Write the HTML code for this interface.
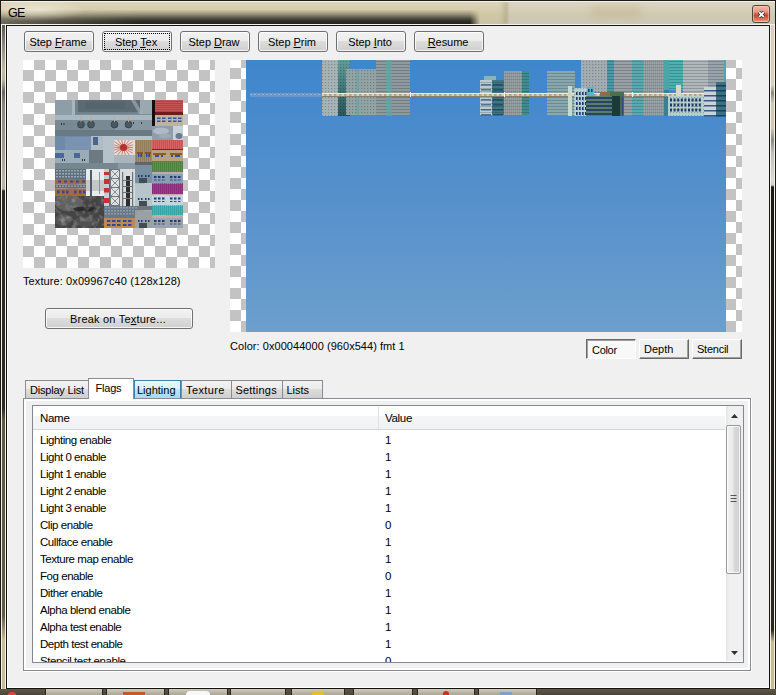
<!DOCTYPE html>
<html><head><meta charset="utf-8">
<style>
*{box-sizing:border-box;margin:0;padding:0}
html,body{width:776px;height:695px;overflow:hidden;background:#c9c1a4}
body{position:relative;font-family:"Liberation Sans",sans-serif;font-size:11px;color:#000}
.a{position:absolute}
.t{position:absolute;white-space:nowrap;line-height:13px}
/* title bar */
#frame{left:0;top:0;width:776px;height:689px;background:linear-gradient(180deg,#cdc3a2,#c2b897 50%,#bdb494);border:1px solid #1a1a16;border-bottom:none}
#title{left:1px;top:1px;width:774px;height:24px;
 background:linear-gradient(180deg,#f4efe2 0,#dcd4b8 1px,#d8cfb0 8px,#cfc6a4 12px,#bdb598 15px,#8f8a76 19px,#5f5c50 23px,#4a4840 24px)}
#band{left:140px;top:11px;width:340px;height:15px;background:#1e1e1a;filter:blur(3px);opacity:.9}
#band2{left:-10px;top:16px;width:160px;height:12px;background:#3a3934;filter:blur(5px);opacity:.7}
#client{left:6px;top:25px;width:764px;height:664px;border:1px solid #141410;background:#f0f0f0}
#clientin{left:7px;top:26px;width:762px;height:662px;border-left:1px solid #fff;border-bottom:1px solid #fff}
#taskbar{left:0;top:689px;width:776px;height:6px;background:linear-gradient(#5c5746,#4a4536)}
.tb{position:absolute;top:689px;height:6px;background:linear-gradient(#cfcabb,#a9a493);border-left:1px solid #2a2820;border-right:1px solid #2a2820}
/* buttons */
.btn{position:absolute;height:21px;border:1px solid #707070;border-radius:3px;
 background:linear-gradient(180deg,#f2f2f2 0,#ebebeb 50%,#dddddd 50%,#cfcfcf 100%);
 box-shadow:inset 0 0 0 1px rgba(255,255,255,.75)}
.btn span{position:absolute;left:-1px;right:1px;top:4px;text-align:center;line-height:13px;white-space:nowrap;letter-spacing:-0.05px}
.focus{position:absolute;left:1px;top:1px;right:1px;bottom:1px;border:1px dotted #000}
u{text-decoration:underline;text-decoration-thickness:1px;text-underline-offset:0.5px}
/* close */
#close{left:752px;top:5px;width:18px;height:18px;border:1px solid #4a4842;border-radius:3px;background:linear-gradient(180deg,#f3b4a0 0,#eb9a82 35%,#d5603e 50%,#c84a28 60%,#e07a5c 85%,#eea48c 100%);box-shadow:inset 0 0 0 1px rgba(255,215,200,.55)}
/* checker */
.chk{position:absolute}
/* tabs */
.tab{position:absolute;top:380px;height:18px;border:1px solid #898c95;border-bottom:none;
 background:linear-gradient(180deg,#f2f2f2 0,#ebebeb 50%,#dddddd 50%,#cfcfcf 100%)}
.tab span{position:absolute;top:3px;line-height:13px;white-space:nowrap;letter-spacing:-0.3px}
#tabbody{left:23px;top:398px;width:728px;height:273px;border:1px solid #898c95;background:#f0f0f0;box-shadow:inset 2px 2px 0 #fff, inset -2px -2px 0 #fff, 1px 1px 0 #fff}
#list{left:32px;top:405px;width:712px;height:258px;border:1px solid #828790;background:#fff;overflow:hidden}
.row{position:absolute;left:7px;line-height:13px;white-space:nowrap;letter-spacing:-0.45px;font-size:11.5px}
.val{position:absolute;left:352px;line-height:13px;white-space:nowrap;font-size:11.5px}
.pb{position:absolute;top:339px;width:50px;height:20px;background:#f0f0f0;
 border-top:1px solid #fff;border-left:1px solid #fff;border-right:1px solid #696969;border-bottom:1px solid #696969;
 box-shadow:inset -1px -1px 0 #a0a0a0}
.pb span{position:absolute;top:3px;left:4px;line-height:13px;white-space:nowrap}
</style></head>
<body>
<div id="frame" class="a"></div>
<div class="a" style="left:2px;top:25px;width:3px;height:664px;background:linear-gradient(180deg,#5a5850 0,#8a8a80 20px,#c0bca8 45px,#b8b4a2 55px,#6a6860 67px,#8a8880 80px,#a09c94 125px,#b8b4a8 155px,#b4b0a4 164px,#2c2a22 166px,#2c2a22 383px,#5e5848 395px,#5e5848 590px,#c8bc98 615px,#c8bc98 664px)"></div>
<div class="a" style="left:771px;top:25px;width:3px;height:664px;background:linear-gradient(180deg,#d8d0c0 0,#d8d0c0 60px,#8a8a80 68px,#d0c8b8 78px,#d0c8b8 103px,#8a8a84 115px,#c0c0bc 128px,#d8d8d4 155px,#d0d0cc 160px,#1c1c16 162px,#2a2820 605px,#c8bc98 617px,#c8bc98 664px)"></div>
<div class="a" style="left:1px;top:1px;width:1px;height:688px;background:#f4f0e4"></div>
<div class="a" style="left:5px;top:24px;width:1px;height:665px;background:#f4f0e4"></div>
<div class="a" style="left:770px;top:24px;width:1px;height:665px;background:#f4f0e4"></div>
<div class="a" style="left:774px;top:1px;width:1px;height:688px;background:#f4f0e4"></div>
<div id="tb" class="a" style="left:1px;top:1px;width:774px;height:24px;overflow:hidden;border-top:1px solid #f6f2e6;border-bottom:1px solid #f4f2ea;background:linear-gradient(180deg,#dcd4ba 0,#d6cdac 9px,#d0c7a4 13px,#cbc3a5 22px)">
 <div class="a" style="left:-10px;top:8px;width:520px;height:30px;background:linear-gradient(180deg,rgba(30,30,26,0) 0,rgba(30,30,26,.45) 6px,rgba(30,30,26,.92) 10px,#22221e 14px);filter:blur(2px);-webkit-mask-image:linear-gradient(90deg,rgba(0,0,0,.55) 0,rgba(0,0,0,.75) 60px,#000 150px,#000 479px,transparent 489px)"></div>
 <div class="a" style="left:0px;top:0px;width:120px;height:22px;background:radial-gradient(ellipse 50px 11px at 35px 8px,rgba(255,252,240,.5),rgba(255,252,240,0))"></div>
 <div class="a" style="left:506px;top:0;width:268px;height:22px;background:linear-gradient(180deg,#dbd6c4 0,#d5cfb8 8px,#d0c9b0 13px,#cdc9ba 22px)"></div>
 <div class="a" style="left:590px;top:4px;width:50px;height:12px;background:rgba(190,170,120,.35);filter:blur(5px)"></div>
 <div class="a" style="left:499px;top:0;width:8px;height:22px;background:linear-gradient(90deg,rgba(165,155,125,.0),rgba(165,155,125,.6));filter:blur(1px)"></div>
</div>
<div class="t" style="left:8px;top:6px;font-size:12.5px;line-height:14px;letter-spacing:-0.6px">GE</div>
<div id="close" class="a"><svg width="16" height="16" style="position:absolute;left:0;top:0"><path d="M6 6L11 11M11 6L6 11" stroke="#33415a" stroke-width="3.4"/><path d="M6.2 6.2L10.8 10.8M10.8 6.2L6.2 10.8" stroke="#fff" stroke-width="1.7"/></svg></div>
<div id="client" class="a"></div>
<div id="taskbar" class="a"></div>
<div class="tb" style="left:45px;width:58px"></div>
<div class="tb" style="left:106px;width:59px"></div>
<div class="tb" style="left:168px;width:60px"></div>
<div class="tb" style="left:230px;width:56px"></div>
<div class="tb" style="left:291px;width:54px"></div>
<div class="tb" style="left:353px;width:60px"></div>
<div class="tb" style="left:417px;width:58px"></div>
<div class="tb" style="left:478px;width:59px"></div>
<div class="a" style="left:8px;top:692px;width:8px;height:3px;border-radius:4px 4px 0 0;background:#d84838"></div>
<div class="a" style="left:123px;top:692px;width:22px;height:3px;background:#c8582a"></div>
<div class="a" style="left:186px;top:691px;width:24px;height:4px;border-radius:5px 5px 0 0;background:#f8f8f8"></div>
<div class="a" style="left:312px;top:691px;width:12px;height:4px;border-radius:6px 6px 0 0;background:#e8c020"></div>
<div class="a" style="left:443px;top:691px;width:6px;height:4px;border-radius:3px 3px 0 0;background:#d03020"></div>
<div class="a" style="left:500px;top:692px;width:12px;height:3px;background:#6a9ad8;opacity:.7"></div>

<div id="clientin" class="a"></div>

<!-- toolbar buttons -->
<div class="btn" style="left:24px;top:31px;width:70px"><span>Step <u>F</u>rame</span></div>
<div class="btn" style="left:102px;top:31px;width:70px"><div class="focus"></div><span>Step <u>T</u>ex</span></div>
<div class="btn" style="left:180px;top:31px;width:70px"><span>Step <u>D</u>raw</span></div>
<div class="btn" style="left:258px;top:31px;width:70px"><span>Step <u>P</u>rim</span></div>
<div class="btn" style="left:336px;top:31px;width:70px"><span>Step <u>I</u>nto</span></div>
<div class="btn" style="left:414px;top:31px;width:70px"><span><u>R</u>esume</span></div>

<!-- texture checker -->
<svg class="chk" style="left:23px;top:60px" width="192" height="208">
 <defs><pattern id="p1" x="0" y="-1" width="22" height="22" patternUnits="userSpaceOnUse">
  <rect width="22" height="22" fill="#fff"/><rect x="11" width="11" height="11" fill="#c3c3c3"/><rect y="11" width="11" height="11" fill="#c3c3c3"/></pattern></defs>
 <rect width="192" height="208" fill="url(#p1)" shape-rendering="crispEdges"/>
</svg>
<svg class="a" id="tex" style="left:55px;top:100px;filter:blur(0.35px)" width="128" height="128" viewBox="0 0 128 128"><rect x="0" y="0" width="97" height="37" fill="#7d8d97" /><rect x="0" y="0" width="19" height="15" fill="#8e9ea8" /><rect x="17" y="0" width="3" height="15" fill="#a8b6bd" /><rect x="20" y="0" width="77" height="14" fill="#73838d" /><rect x="23" y="0" width="62" height="12" fill="#5c6a73" /><rect x="85" y="0" width="12" height="14" fill="#9aa8b0" /><path d="M80 0 L88 14 L84 14 L76 0Z" fill="#a8b4bc" opacity="0.6"/><rect x="30" y="2" width="40" height="7" fill="#56646e" /><rect x="0" y="15" width="97" height="5" fill="#a9b7bf" /><rect x="0" y="20" width="97" height="17" fill="#798993" /><rect x="0" y="30" width="97" height="7" fill="#6a7a84" /><rect x="60" y="20" width="37" height="10" fill="#8797a1" /><circle cx="26" cy="24.5" r="3.4" fill="#4a5860" stroke="#3a464e" stroke-width="1"/><rect x="25.5" y="17" width="1" height="5" fill="#c0a898"/><circle cx="36" cy="24.5" r="3.4" fill="#4a5860" stroke="#3a464e" stroke-width="1"/><rect x="35.5" y="17" width="1" height="5" fill="#c0a898"/><circle cx="59.5" cy="24.5" r="3.4" fill="#4a5860" stroke="#3a464e" stroke-width="1"/><rect x="59.0" y="17" width="1" height="5" fill="#c0a898"/><circle cx="73.5" cy="24.5" r="3.4" fill="#4a5860" stroke="#3a464e" stroke-width="1"/><rect x="73.0" y="17" width="1" height="5" fill="#c0a898"/><rect x="6" y="23" width="1" height="2" fill="#303840" /><rect x="8.5" y="23" width="1" height="2" fill="#303840" /><rect x="78" y="22" width="1" height="2" fill="#303840" /><rect x="86" y="22" width="1" height="2" fill="#303840" /><rect x="97" y="0" width="3" height="26" fill="#101010" /><rect x="100" y="0" width="28" height="15" fill="#b04444" /><rect x="100" y="0" width="28" height="1" fill="#c45656" /><rect x="100" y="2" width="28" height="1" fill="#c45656" /><rect x="100" y="4" width="28" height="1" fill="#c45656" /><rect x="100" y="6" width="28" height="1" fill="#c45656" /><rect x="100" y="8" width="28" height="1" fill="#c45656" /><rect x="100" y="10" width="28" height="1" fill="#c45656" /><rect x="100" y="12" width="28" height="1" fill="#c45656" /><rect x="100" y="12" width="28" height="3" fill="#6e1c1c" /><rect x="100" y="15" width="28" height="11" fill="#bfb3a0" /><rect x="102" y="17.5" width="3.5" height="1.5" fill="#2c54a8" /><rect x="107" y="17.5" width="3.5" height="1.5" fill="#2c54a8" /><rect x="113" y="17.5" width="3.5" height="1.5" fill="#2c54a8" /><rect x="118" y="17.5" width="3.5" height="1.5" fill="#2c54a8" /><rect x="123" y="17.5" width="3.5" height="1.5" fill="#2c54a8" /><rect x="102" y="20.5" width="3.5" height="1.5" fill="#2c54a8" /><rect x="107" y="20.5" width="3.5" height="1.5" fill="#2c54a8" /><rect x="113" y="20.5" width="3.5" height="1.5" fill="#2c54a8" /><rect x="118" y="20.5" width="3.5" height="1.5" fill="#2c54a8" /><rect x="123" y="20.5" width="3.5" height="1.5" fill="#2c54a8" /><rect x="97" y="26" width="21" height="14" fill="#8e9cac" /><ellipse cx="106" cy="31" rx="8" ry="3.5" fill="#aebac6"/><ellipse cx="110" cy="36" rx="6" ry="2.5" fill="#9eaab8"/><rect x="118" y="26" width="10" height="14" fill="#c8d0d8" /><ellipse cx="124" cy="36" rx="3.5" ry="3" fill="#6a7a90"/><rect x="65" y="36" width="32" height="4" fill="#b6c2ca" /><rect x="0" y="36" width="36" height="15" fill="#6f89a9" /><rect x="10" y="37" width="26" height="13" fill="#7a93b0" /><rect x="36" y="36" width="12" height="14" fill="#b0bcc4" /><rect x="38" y="37" width="5" height="8" fill="#4b6393" /><rect x="48" y="36" width="17" height="29" fill="#b6c2ca" /><rect x="0" y="50" width="34" height="15" fill="#9aacb8" /><rect x="0" y="53" width="9" height="5" fill="#4a6898" /><rect x="19" y="53" width="6" height="5" fill="#4a6898" /><rect x="7" y="59" width="1" height="2" fill="#303840" /><rect x="9" y="59" width="1" height="2" fill="#303840" /><rect x="27" y="59" width="1" height="2" fill="#303840" /><rect x="29" y="59" width="1" height="2" fill="#303840" /><rect x="34" y="50" width="14" height="15" fill="#6c7a82" /><rect x="59" y="40" width="21" height="15" fill="#e6ded6" /><clipPath id="sunc"><rect x="59" y="40" width="21" height="15"/></clipPath><g clip-path="url(#sunc)"><line x1="68.5" y1="47.5" x2="80.5" y2="47.5" stroke="#c85050" stroke-width="0.7"/><line x1="68.5" y1="47.5" x2="79.8" y2="50.6" stroke="#c85050" stroke-width="0.7"/><line x1="68.5" y1="47.5" x2="77.7" y2="53.3" stroke="#c85050" stroke-width="0.7"/><line x1="68.5" y1="47.5" x2="74.5" y2="55.3" stroke="#c85050" stroke-width="0.7"/><line x1="68.5" y1="47.5" x2="70.6" y2="56.4" stroke="#c85050" stroke-width="0.7"/><line x1="68.5" y1="47.5" x2="66.4" y2="56.4" stroke="#c85050" stroke-width="0.7"/><line x1="68.5" y1="47.5" x2="62.5" y2="55.3" stroke="#c85050" stroke-width="0.7"/><line x1="68.5" y1="47.5" x2="59.3" y2="53.3" stroke="#c85050" stroke-width="0.7"/><line x1="68.5" y1="47.5" x2="57.2" y2="50.6" stroke="#c85050" stroke-width="0.7"/><line x1="68.5" y1="47.5" x2="56.5" y2="47.5" stroke="#c85050" stroke-width="0.7"/><line x1="68.5" y1="47.5" x2="57.2" y2="44.4" stroke="#c85050" stroke-width="0.7"/><line x1="68.5" y1="47.5" x2="59.3" y2="41.7" stroke="#c85050" stroke-width="0.7"/><line x1="68.5" y1="47.5" x2="62.5" y2="39.7" stroke="#c85050" stroke-width="0.7"/><line x1="68.5" y1="47.5" x2="66.4" y2="38.6" stroke="#c85050" stroke-width="0.7"/><line x1="68.5" y1="47.5" x2="70.6" y2="38.6" stroke="#c85050" stroke-width="0.7"/><line x1="68.5" y1="47.5" x2="74.5" y2="39.7" stroke="#c85050" stroke-width="0.7"/><line x1="68.5" y1="47.5" x2="77.7" y2="41.7" stroke="#c85050" stroke-width="0.7"/><line x1="68.5" y1="47.5" x2="79.8" y2="44.4" stroke="#c85050" stroke-width="0.7"/><circle cx="68.5" cy="47.5" r="3.5" fill="#b83030"/></g><rect x="59" y="55" width="21" height="10" fill="#aab4bc" /><rect x="78" y="40" width="2" height="15" fill="#e6ded6" /><rect x="80" y="40" width="17" height="22" fill="#a38c6a" /><rect x="81" y="40" width="1" height="22" fill="#937c5c" /><rect x="83" y="40" width="1" height="22" fill="#937c5c" /><rect x="85" y="40" width="1" height="22" fill="#937c5c" /><rect x="87" y="40" width="1" height="22" fill="#937c5c" /><rect x="89" y="40" width="1" height="22" fill="#937c5c" /><rect x="91" y="40" width="1" height="22" fill="#937c5c" /><rect x="93" y="40" width="1" height="22" fill="#937c5c" /><rect x="95" y="40" width="1" height="22" fill="#937c5c" /><rect x="82" y="52" width="6" height="2" fill="#8a5424" /><rect x="90" y="52" width="6" height="2" fill="#8a5424" /><rect x="83" y="54" width="1.5" height="3" fill="#2a4aa0" /><rect x="85.5" y="54" width="1.5" height="3" fill="#2a4aa0" /><rect x="91" y="54" width="1.5" height="3" fill="#2a4aa0" /><rect x="93.5" y="54" width="1.5" height="3" fill="#2a4aa0" /><rect x="80" y="62" width="17" height="3" fill="#5e666e" /><rect x="97" y="40" width="31" height="9" fill="#c85252" /><rect x="97" y="40" width="1" height="9" fill="#d86262" /><rect x="99" y="40" width="1" height="9" fill="#d86262" /><rect x="101" y="40" width="1" height="9" fill="#d86262" /><rect x="103" y="40" width="1" height="9" fill="#d86262" /><rect x="105" y="40" width="1" height="9" fill="#d86262" /><rect x="107" y="40" width="1" height="9" fill="#d86262" /><rect x="109" y="40" width="1" height="9" fill="#d86262" /><rect x="111" y="40" width="1" height="9" fill="#d86262" /><rect x="113" y="40" width="1" height="9" fill="#d86262" /><rect x="115" y="40" width="1" height="9" fill="#d86262" /><rect x="117" y="40" width="1" height="9" fill="#d86262" /><rect x="119" y="40" width="1" height="9" fill="#d86262" /><rect x="121" y="40" width="1" height="9" fill="#d86262" /><rect x="123" y="40" width="1" height="9" fill="#d86262" /><rect x="125" y="40" width="1" height="9" fill="#d86262" /><rect x="127" y="40" width="1" height="9" fill="#d86262" /><rect x="97" y="49" width="31" height="1" fill="#2a4a2a" /><rect x="97" y="50" width="31" height="11" fill="#b9a282" /><rect x="98" y="53" width="13" height="2" fill="#94581e" /><rect x="115" y="53" width="12" height="2" fill="#94581e" /><rect x="100" y="55" width="4" height="2" fill="#2a50a8" /><rect x="106" y="55" width="2" height="2" fill="#2a50a8" /><rect x="116" y="55" width="2" height="2" fill="#2a50a8" /><rect x="120" y="55" width="5" height="2" fill="#2a50a8" /><rect x="97" y="61" width="31" height="11" fill="#5c9449" /><rect x="97" y="61" width="1" height="11" fill="#4e8040" /><rect x="99" y="61" width="1" height="11" fill="#4e8040" /><rect x="101" y="61" width="1" height="11" fill="#4e8040" /><rect x="103" y="61" width="1" height="11" fill="#4e8040" /><rect x="105" y="61" width="1" height="11" fill="#4e8040" /><rect x="107" y="61" width="1" height="11" fill="#4e8040" /><rect x="109" y="61" width="1" height="11" fill="#4e8040" /><rect x="111" y="61" width="1" height="11" fill="#4e8040" /><rect x="113" y="61" width="1" height="11" fill="#4e8040" /><rect x="115" y="61" width="1" height="11" fill="#4e8040" /><rect x="117" y="61" width="1" height="11" fill="#4e8040" /><rect x="119" y="61" width="1" height="11" fill="#4e8040" /><rect x="121" y="61" width="1" height="11" fill="#4e8040" /><rect x="123" y="61" width="1" height="11" fill="#4e8040" /><rect x="125" y="61" width="1" height="11" fill="#4e8040" /><rect x="127" y="61" width="1" height="11" fill="#4e8040" /><rect x="97" y="72" width="31" height="2" fill="#c8a8a8" /><rect x="97" y="74" width="31" height="9.5" fill="#8aa0b2" /><rect x="97" y="83.5" width="31" height="10.5" fill="#9c3c8a" /><rect x="97" y="83.5" width="1" height="10.5" fill="#8a2c78" /><rect x="99" y="83.5" width="1" height="10.5" fill="#8a2c78" /><rect x="101" y="83.5" width="1" height="10.5" fill="#8a2c78" /><rect x="103" y="83.5" width="1" height="10.5" fill="#8a2c78" /><rect x="105" y="83.5" width="1" height="10.5" fill="#8a2c78" /><rect x="107" y="83.5" width="1" height="10.5" fill="#8a2c78" /><rect x="109" y="83.5" width="1" height="10.5" fill="#8a2c78" /><rect x="111" y="83.5" width="1" height="10.5" fill="#8a2c78" /><rect x="113" y="83.5" width="1" height="10.5" fill="#8a2c78" /><rect x="115" y="83.5" width="1" height="10.5" fill="#8a2c78" /><rect x="117" y="83.5" width="1" height="10.5" fill="#8a2c78" /><rect x="119" y="83.5" width="1" height="10.5" fill="#8a2c78" /><rect x="121" y="83.5" width="1" height="10.5" fill="#8a2c78" /><rect x="123" y="83.5" width="1" height="10.5" fill="#8a2c78" /><rect x="125" y="83.5" width="1" height="10.5" fill="#8a2c78" /><rect x="127" y="83.5" width="1" height="10.5" fill="#8a2c78" /><rect x="97" y="94" width="31" height="1.5" fill="#c8a8b0" /><rect x="97" y="95.5" width="31" height="10" fill="#c8d4dc" /><rect x="97" y="105.5" width="31" height="10" fill="#42b8b8" /><rect x="97" y="105.5" width="1" height="10" fill="#34a4a4" /><rect x="99" y="105.5" width="1" height="10" fill="#34a4a4" /><rect x="101" y="105.5" width="1" height="10" fill="#34a4a4" /><rect x="103" y="105.5" width="1" height="10" fill="#34a4a4" /><rect x="105" y="105.5" width="1" height="10" fill="#34a4a4" /><rect x="107" y="105.5" width="1" height="10" fill="#34a4a4" /><rect x="109" y="105.5" width="1" height="10" fill="#34a4a4" /><rect x="111" y="105.5" width="1" height="10" fill="#34a4a4" /><rect x="113" y="105.5" width="1" height="10" fill="#34a4a4" /><rect x="115" y="105.5" width="1" height="10" fill="#34a4a4" /><rect x="117" y="105.5" width="1" height="10" fill="#34a4a4" /><rect x="119" y="105.5" width="1" height="10" fill="#34a4a4" /><rect x="121" y="105.5" width="1" height="10" fill="#34a4a4" /><rect x="123" y="105.5" width="1" height="10" fill="#34a4a4" /><rect x="125" y="105.5" width="1" height="10" fill="#34a4a4" /><rect x="127" y="105.5" width="1" height="10" fill="#34a4a4" /><rect x="97" y="115.5" width="31" height="2.5" fill="#c8a8a8" /><rect x="97" y="118" width="31" height="10" fill="#9aa4ac" /><rect x="99" y="76" width="2.5" height="2" fill="#1c3a80" /><rect x="99" y="79.5" width="2.5" height="1" fill="#2c4a90" /><rect x="103" y="76" width="2.5" height="2" fill="#1c3a80" /><rect x="103" y="79.5" width="2.5" height="1" fill="#2c4a90" /><rect x="107" y="76" width="2.5" height="2" fill="#1c3a80" /><rect x="107" y="79.5" width="2.5" height="1" fill="#2c4a90" /><rect x="115" y="76" width="2.5" height="2" fill="#1c3a80" /><rect x="115" y="79.5" width="2.5" height="1" fill="#2c4a90" /><rect x="119" y="76" width="2.5" height="2" fill="#1c3a80" /><rect x="119" y="79.5" width="2.5" height="1" fill="#2c4a90" /><rect x="123" y="76" width="2.5" height="2" fill="#1c3a80" /><rect x="123" y="79.5" width="2.5" height="1" fill="#2c4a90" /><rect x="99" y="97.5" width="2.5" height="2" fill="#1c3a80" /><rect x="99" y="101.0" width="2.5" height="1" fill="#2c4a90" /><rect x="103" y="97.5" width="2.5" height="2" fill="#1c3a80" /><rect x="103" y="101.0" width="2.5" height="1" fill="#2c4a90" /><rect x="107" y="97.5" width="2.5" height="2" fill="#1c3a80" /><rect x="107" y="101.0" width="2.5" height="1" fill="#2c4a90" /><rect x="115" y="97.5" width="2.5" height="2" fill="#1c3a80" /><rect x="115" y="101.0" width="2.5" height="1" fill="#2c4a90" /><rect x="119" y="97.5" width="2.5" height="2" fill="#1c3a80" /><rect x="119" y="101.0" width="2.5" height="1" fill="#2c4a90" /><rect x="123" y="97.5" width="2.5" height="2" fill="#1c3a80" /><rect x="123" y="101.0" width="2.5" height="1" fill="#2c4a90" /><rect x="99" y="120" width="2.5" height="2" fill="#1c3a80" /><rect x="99" y="123.5" width="2.5" height="1" fill="#2c4a90" /><rect x="103" y="120" width="2.5" height="2" fill="#1c3a80" /><rect x="103" y="123.5" width="2.5" height="1" fill="#2c4a90" /><rect x="107" y="120" width="2.5" height="2" fill="#1c3a80" /><rect x="107" y="123.5" width="2.5" height="1" fill="#2c4a90" /><rect x="115" y="120" width="2.5" height="2" fill="#1c3a80" /><rect x="115" y="123.5" width="2.5" height="1" fill="#2c4a90" /><rect x="119" y="120" width="2.5" height="2" fill="#1c3a80" /><rect x="119" y="123.5" width="2.5" height="1" fill="#2c4a90" /><rect x="123" y="120" width="2.5" height="2" fill="#1c3a80" /><rect x="123" y="123.5" width="2.5" height="1" fill="#2c4a90" /><rect x="80" y="65" width="17" height="18.5" fill="#7890a2" /><rect x="80" y="83.5" width="17" height="22.5" fill="#b8c4cc" /><rect x="80" y="106" width="17" height="4.5" fill="#6e767e" /><rect x="80" y="110.5" width="17" height="17.5" fill="#9aa0a4" /><rect x="84" y="78" width="8" height="5" fill="#434b53" /><rect x="83" y="75" width="1.5" height="2" fill="#1c3a80" /><rect x="86" y="75" width="1.5" height="2" fill="#1c3a80" /><rect x="90" y="75" width="1.5" height="2" fill="#1c3a80" /><rect x="93" y="75" width="1.5" height="2" fill="#1c3a80" /><rect x="84" y="101" width="8" height="5" fill="#434b53" /><rect x="83" y="98" width="1.5" height="2" fill="#1c3a80" /><rect x="86" y="98" width="1.5" height="2" fill="#1c3a80" /><rect x="90" y="98" width="1.5" height="2" fill="#1c3a80" /><rect x="93" y="98" width="1.5" height="2" fill="#1c3a80" /><rect x="84" y="123" width="8" height="5" fill="#434b53" /><rect x="83" y="120" width="1.5" height="2" fill="#1c3a80" /><rect x="86" y="120" width="1.5" height="2" fill="#1c3a80" /><rect x="90" y="120" width="1.5" height="2" fill="#1c3a80" /><rect x="93" y="120" width="1.5" height="2" fill="#1c3a80" /><rect x="0" y="63" width="80" height="6" fill="#77878f" /><rect x="0" y="69" width="31" height="10" fill="#5e6e7c" /><rect x="1" y="70" width="2" height="1.5" fill="#9aaab6" /><rect x="4" y="70" width="2" height="1.5" fill="#9aaab6" /><rect x="7" y="70" width="2" height="1.5" fill="#9aaab6" /><rect x="10" y="70" width="2" height="1.5" fill="#9aaab6" /><rect x="13" y="70" width="2" height="1.5" fill="#9aaab6" /><rect x="16" y="70" width="2" height="1.5" fill="#9aaab6" /><rect x="19" y="70" width="2" height="1.5" fill="#9aaab6" /><rect x="22" y="70" width="2" height="1.5" fill="#9aaab6" /><rect x="25" y="70" width="2" height="1.5" fill="#9aaab6" /><rect x="28" y="70" width="2" height="1.5" fill="#9aaab6" /><rect x="31" y="70" width="2" height="1.5" fill="#9aaab6" /><rect x="1" y="73" width="2" height="1.5" fill="#9aaab6" /><rect x="4" y="73" width="2" height="1.5" fill="#9aaab6" /><rect x="7" y="73" width="2" height="1.5" fill="#9aaab6" /><rect x="10" y="73" width="2" height="1.5" fill="#9aaab6" /><rect x="13" y="73" width="2" height="1.5" fill="#9aaab6" /><rect x="16" y="73" width="2" height="1.5" fill="#9aaab6" /><rect x="19" y="73" width="2" height="1.5" fill="#9aaab6" /><rect x="22" y="73" width="2" height="1.5" fill="#9aaab6" /><rect x="25" y="73" width="2" height="1.5" fill="#9aaab6" /><rect x="28" y="73" width="2" height="1.5" fill="#9aaab6" /><rect x="31" y="73" width="2" height="1.5" fill="#9aaab6" /><rect x="1" y="76" width="2" height="1.5" fill="#9aaab6" /><rect x="4" y="76" width="2" height="1.5" fill="#9aaab6" /><rect x="7" y="76" width="2" height="1.5" fill="#9aaab6" /><rect x="10" y="76" width="2" height="1.5" fill="#9aaab6" /><rect x="13" y="76" width="2" height="1.5" fill="#9aaab6" /><rect x="16" y="76" width="2" height="1.5" fill="#9aaab6" /><rect x="19" y="76" width="2" height="1.5" fill="#9aaab6" /><rect x="22" y="76" width="2" height="1.5" fill="#9aaab6" /><rect x="25" y="76" width="2" height="1.5" fill="#9aaab6" /><rect x="28" y="76" width="2" height="1.5" fill="#9aaab6" /><rect x="31" y="76" width="2" height="1.5" fill="#9aaab6" /><rect x="0" y="79" width="31" height="5.5" fill="#a86a3c" /><rect x="3" y="80.5" width="3" height="2" fill="#2a4aa0" /><rect x="9" y="80.5" width="3" height="2" fill="#2a4aa0" /><rect x="15" y="80.5" width="3" height="2" fill="#2a4aa0" /><rect x="21" y="80.5" width="3" height="2" fill="#2a4aa0" /><rect x="27" y="80.5" width="3" height="2" fill="#2a4aa0" /><rect x="0" y="84.5" width="31" height="4" fill="#5e6e7e" /><rect x="1" y="85.5" width="2" height="1.5" fill="#8a9aa8" /><rect x="4" y="85.5" width="2" height="1.5" fill="#8a9aa8" /><rect x="7" y="85.5" width="2" height="1.5" fill="#8a9aa8" /><rect x="10" y="85.5" width="2" height="1.5" fill="#8a9aa8" /><rect x="13" y="85.5" width="2" height="1.5" fill="#8a9aa8" /><rect x="16" y="85.5" width="2" height="1.5" fill="#8a9aa8" /><rect x="19" y="85.5" width="2" height="1.5" fill="#8a9aa8" /><rect x="22" y="85.5" width="2" height="1.5" fill="#8a9aa8" /><rect x="25" y="85.5" width="2" height="1.5" fill="#8a9aa8" /><rect x="28" y="85.5" width="2" height="1.5" fill="#8a9aa8" /><rect x="31" y="85.5" width="2" height="1.5" fill="#8a9aa8" /><rect x="0" y="88.5" width="31" height="7.5" fill="#a86a3c" /><rect x="2" y="90.5" width="2.5" height="3" fill="#2a4aa0" /><rect x="7" y="90.5" width="2.5" height="3" fill="#2a4aa0" /><rect x="11" y="90.5" width="2.5" height="3" fill="#2a4aa0" /><rect x="19" y="90.5" width="2.5" height="3" fill="#2a4aa0" /><rect x="24" y="90.5" width="2.5" height="3" fill="#2a4aa0" /><rect x="28" y="90.5" width="2.5" height="3" fill="#2a4aa0" /><rect x="31" y="69" width="18" height="27" fill="#e8ebec" /><rect x="31" y="80" width="18" height="11" fill="#c4c6c8" /><rect x="35" y="70" width="2" height="26" fill="#4e5e68" /><rect x="44" y="72" width="1" height="22" fill="#8a969c" /><filter id="noise" x="0" y="0" width="100%" height="100%"><feTurbulence type="fractalNoise" baseFrequency="0.18" numOctaves="3" seed="7"/><feColorMatrix type="matrix" values="0 0 0 0 0.5  0 0 0 0 0.5  0 0 0 0 0.5  1.4 1.4 1.4 0 -2.0"/></filter><rect x="0" y="96" width="49" height="32" fill="#444444" /><ellipse cx="14" cy="103" rx="14" ry="8" fill="#6e6e6e" opacity="0.7"/><ellipse cx="30" cy="122" rx="12" ry="5" fill="#5a5a5a" opacity="0.6"/><ellipse cx="30" cy="109" rx="12" ry="2.5" fill="#262626" opacity="0.85"/><ellipse cx="8" cy="120" rx="8" ry="6" fill="#606060" opacity="0.6"/><rect x="0" y="96" width="49" height="32" filter="url(#noise)" opacity="0.5"/><rect x="49" y="69" width="5" height="37" fill="#c4ccd4" /><rect x="49" y="72" width="5" height="3" fill="#c23434" /><rect x="49" y="79" width="5" height="5" fill="#c23434" /><rect x="49" y="88" width="5" height="4.5" fill="#c23434" /><rect x="49" y="98" width="5" height="5" fill="#c23434" /><rect x="54" y="69" width="1" height="37" fill="#606870" /><rect x="55" y="69" width="10" height="37" fill="#707880" /><rect x="56" y="70" width="8" height="8" fill="#e0e2e4" /><path d="M56 70L64 78M64 70L56 78" stroke="#707478" stroke-width="0.8"/><rect x="56" y="79" width="8" height="8" fill="#e0e2e4" /><path d="M56 79L64 87M64 79L56 87" stroke="#707478" stroke-width="0.8"/><rect x="56" y="88" width="8" height="8" fill="#e0e2e4" /><path d="M56 88L64 96M64 88L56 96" stroke="#707478" stroke-width="0.8"/><rect x="56" y="97" width="8" height="8" fill="#e0e2e4" /><path d="M56 97L64 105M64 97L56 105" stroke="#707478" stroke-width="0.8"/><rect x="65" y="69" width="15" height="37" fill="#d8dcdc" /><rect x="71" y="76" width="4" height="30" fill="#2e2e2e" /><rect x="67" y="72" width="1.2" height="34" fill="#6a747a" /><rect x="77" y="72" width="1.2" height="34" fill="#6a747a" /><rect x="67" y="80" width="11" height="1" fill="#6a747a" /><rect x="67" y="86" width="11" height="1" fill="#6a747a" /><rect x="67" y="92" width="11" height="1" fill="#6a747a" /><rect x="67" y="98" width="11" height="1" fill="#6a747a" /><rect x="63" y="63" width="17" height="6" fill="#8a9aa4" /><rect x="49" y="106" width="31" height="12" fill="#687886" /><rect x="50" y="107" width="2" height="1.5" fill="#8c9caa" /><rect x="53" y="107" width="2" height="1.5" fill="#8c9caa" /><rect x="56" y="107" width="2" height="1.5" fill="#8c9caa" /><rect x="59" y="107" width="2" height="1.5" fill="#8c9caa" /><rect x="62" y="107" width="2" height="1.5" fill="#8c9caa" /><rect x="65" y="107" width="2" height="1.5" fill="#8c9caa" /><rect x="68" y="107" width="2" height="1.5" fill="#8c9caa" /><rect x="71" y="107" width="2" height="1.5" fill="#8c9caa" /><rect x="74" y="107" width="2" height="1.5" fill="#8c9caa" /><rect x="77" y="107" width="2" height="1.5" fill="#8c9caa" /><rect x="80" y="107" width="2" height="1.5" fill="#8c9caa" /><rect x="50" y="110" width="2" height="1.5" fill="#8c9caa" /><rect x="53" y="110" width="2" height="1.5" fill="#8c9caa" /><rect x="56" y="110" width="2" height="1.5" fill="#8c9caa" /><rect x="59" y="110" width="2" height="1.5" fill="#8c9caa" /><rect x="62" y="110" width="2" height="1.5" fill="#8c9caa" /><rect x="65" y="110" width="2" height="1.5" fill="#8c9caa" /><rect x="68" y="110" width="2" height="1.5" fill="#8c9caa" /><rect x="71" y="110" width="2" height="1.5" fill="#8c9caa" /><rect x="74" y="110" width="2" height="1.5" fill="#8c9caa" /><rect x="77" y="110" width="2" height="1.5" fill="#8c9caa" /><rect x="80" y="110" width="2" height="1.5" fill="#8c9caa" /><rect x="50" y="113" width="2" height="1.5" fill="#8c9caa" /><rect x="53" y="113" width="2" height="1.5" fill="#8c9caa" /><rect x="56" y="113" width="2" height="1.5" fill="#8c9caa" /><rect x="59" y="113" width="2" height="1.5" fill="#8c9caa" /><rect x="62" y="113" width="2" height="1.5" fill="#8c9caa" /><rect x="65" y="113" width="2" height="1.5" fill="#8c9caa" /><rect x="68" y="113" width="2" height="1.5" fill="#8c9caa" /><rect x="71" y="113" width="2" height="1.5" fill="#8c9caa" /><rect x="74" y="113" width="2" height="1.5" fill="#8c9caa" /><rect x="77" y="113" width="2" height="1.5" fill="#8c9caa" /><rect x="80" y="113" width="2" height="1.5" fill="#8c9caa" /><rect x="49" y="118" width="31" height="10" fill="#c08850" /><rect x="52" y="120" width="3.5" height="2" fill="#2a4aa0" /><rect x="52" y="124" width="3.5" height="2" fill="#2a4aa0" /><rect x="57" y="120" width="3.5" height="2" fill="#2a4aa0" /><rect x="57" y="124" width="3.5" height="2" fill="#2a4aa0" /><rect x="62" y="120" width="3.5" height="2" fill="#2a4aa0" /><rect x="62" y="124" width="3.5" height="2" fill="#2a4aa0" /><rect x="68" y="120" width="3.5" height="2" fill="#2a4aa0" /><rect x="68" y="124" width="3.5" height="2" fill="#2a4aa0" /><rect x="73" y="120" width="3.5" height="2" fill="#2a4aa0" /><rect x="73" y="124" width="3.5" height="2" fill="#2a4aa0" /></svg>

<div class="t" style="left:23px;top:275px;letter-spacing:0.1px">Texture: 0x09967c40 (128x128)</div>
<div class="btn" style="left:45px;top:308px;width:148px"><span style="letter-spacing:0.2px">Break on Te<u>x</u>ture...</span></div>

<!-- framebuffer checker -->
<svg class="chk" style="left:230px;top:60px" width="512" height="272">
 <defs><pattern id="p2" x="0" y="-3" width="22" height="22" patternUnits="userSpaceOnUse">
  <rect width="22" height="22" fill="#fff"/><rect x="11" width="11" height="11" fill="#c3c3c3"/><rect y="11" width="11" height="11" fill="#c3c3c3"/></pattern></defs>
 <rect width="512" height="272" fill="url(#p2)" shape-rendering="crispEdges"/>
</svg>
<div class="a" id="fb" style="left:246px;top:60px;width:480px;height:272px;background:linear-gradient(180deg,#3e86cc 0,#5690cc 50%,#6c9fcd 100%)"></div>

<svg class="a" id="sky" style="left:246px;top:60px;filter:blur(0.3px)" width="480" height="60" viewBox="0 0 480 60"><defs>
<pattern id="wg" width="3" height="3" patternUnits="userSpaceOnUse"><rect x="1" y="1" width="1.2" height="1.2" fill="#000" opacity="0.22"/></pattern>
<pattern id="wh" width="3" height="3" patternUnits="userSpaceOnUse"><rect x="0" y="1" width="3" height="1" fill="#000" opacity="0.18"/></pattern>
<pattern id="wv" width="2" height="3" patternUnits="userSpaceOnUse"><rect x="0" y="0" width="1" height="3" fill="#fff" opacity="0.12"/><rect x="0" y="1" width="2" height="1" fill="#000" opacity="0.12"/></pattern>
<linearGradient id="g2" x1="0" y1="0" x2="0" y2="1"><stop offset="0" stop-color="#629e9c"/><stop offset="0.55" stop-color="#3f7476"/><stop offset="1" stop-color="#2c5658"/></linearGradient>
</defs><rect x="4" y="33" width="72" height="4" fill="#8ea8c4"  opacity="0.5"/><g fill="#c8d4e0" opacity="0.45"><rect x="4" y="34" width="2" height="1"/><rect x="8" y="34" width="2" height="1"/><rect x="12" y="34" width="2" height="1"/><rect x="16" y="34" width="2" height="1"/><rect x="20" y="34" width="2" height="1"/><rect x="24" y="34" width="2" height="1"/><rect x="28" y="34" width="2" height="1"/><rect x="32" y="34" width="2" height="1"/><rect x="36" y="34" width="2" height="1"/><rect x="40" y="34" width="2" height="1"/><rect x="44" y="34" width="2" height="1"/><rect x="48" y="34" width="2" height="1"/><rect x="52" y="34" width="2" height="1"/><rect x="56" y="34" width="2" height="1"/><rect x="60" y="34" width="2" height="1"/><rect x="64" y="34" width="2" height="1"/><rect x="68" y="34" width="2" height="1"/><rect x="72" y="34" width="2" height="1"/></g><rect x="76" y="0" width="16" height="56" fill="#a8b3b7" /><rect x="76" y="0" width="16" height="56" fill="url(#wg)" /><rect x="92" y="0" width="12" height="56" fill="url(#g2)" /><rect x="92" y="0" width="12" height="56" fill="url(#wg)" /><rect x="100" y="9" width="30" height="46" fill="#93a4a5" /><rect x="100" y="9" width="30" height="46" fill="url(#wg)" /><rect x="110" y="9" width="3" height="46" fill="#6aa4a4"  opacity="0.7"/><rect x="130" y="0" width="34" height="56" fill="#8e9a9e" /><rect x="130" y="0" width="34" height="56" fill="url(#wh)" /><rect x="140" y="0" width="6" height="56" fill="#5aa8a8"  opacity="0.75"/><rect x="324" y="12" width="5" height="44" fill="#4a9aa8" /><rect x="324" y="12" width="5" height="44" fill="url(#wh)" /><rect x="335" y="0" width="26" height="32" fill="#a4adb1" /><rect x="335" y="0" width="26" height="32" fill="url(#wg)" /><rect x="361" y="0" width="7" height="32" fill="#4a98a8" /><rect x="361" y="0" width="7" height="32" fill="url(#wh)" /><rect x="368" y="0" width="18" height="56" fill="#98a1a5" /><rect x="368" y="0" width="18" height="56" fill="url(#wh)" /><rect x="386" y="0" width="11" height="56" fill="#5aa8b0" /><rect x="386" y="0" width="11" height="56" fill="url(#wh)" /><rect x="397" y="0" width="21" height="56" fill="#8e989c" /><rect x="397" y="0" width="21" height="56" fill="url(#wv)" /><rect x="418" y="30" width="5" height="26" fill="#3a8090" /><rect x="423" y="0" width="14" height="30" fill="#4ab0b0" /><rect x="423" y="0" width="14" height="30" fill="url(#wh)" /><rect x="418" y="0" width="5" height="30" fill="#4aa4a8" /><rect x="437" y="0" width="25" height="32" fill="#b0b8bc" /><rect x="437" y="0" width="25" height="32" fill="url(#wh)" /><rect x="437" y="32" width="25" height="10" fill="#a4aeb2" /><rect x="437" y="32" width="25" height="10" fill="url(#wh)" /><rect x="462" y="0" width="18" height="56" fill="#98a4ac" /><rect x="462" y="0" width="18" height="56" fill="url(#wh)" /><rect x="478" y="0" width="2" height="56" fill="#4aa8b0" /><rect x="238" y="16" width="12" height="5" fill="#8ab4bc" /><rect x="234" y="20" width="12" height="35" fill="#b8ccd4" /><rect x="234" y="20" width="12" height="35" fill="url(#wh)" /><rect x="246" y="20" width="12" height="35" fill="#3e7888" /><rect x="246" y="20" width="12" height="35" fill="url(#wh)" /><rect x="235" y="24" width="10" height="1.5" fill="#2a4a6a"  opacity="0.7"/><rect x="247" y="24" width="10" height="1.5" fill="#1e3a50"  opacity="0.7"/><rect x="235" y="29" width="10" height="1.5" fill="#2a4a6a"  opacity="0.7"/><rect x="247" y="29" width="10" height="1.5" fill="#1e3a50"  opacity="0.7"/><rect x="235" y="34" width="10" height="1.5" fill="#2a4a6a"  opacity="0.7"/><rect x="247" y="34" width="10" height="1.5" fill="#1e3a50"  opacity="0.7"/><rect x="235" y="39" width="10" height="1.5" fill="#2a4a6a"  opacity="0.7"/><rect x="247" y="39" width="10" height="1.5" fill="#1e3a50"  opacity="0.7"/><rect x="235" y="44" width="10" height="1.5" fill="#2a4a6a"  opacity="0.7"/><rect x="247" y="44" width="10" height="1.5" fill="#1e3a50"  opacity="0.7"/><rect x="235" y="49" width="10" height="1.5" fill="#2a4a6a"  opacity="0.7"/><rect x="247" y="49" width="10" height="1.5" fill="#1e3a50"  opacity="0.7"/><rect x="235" y="54" width="10" height="1.5" fill="#2a4a6a"  opacity="0.7"/><rect x="247" y="54" width="10" height="1.5" fill="#1e3a50"  opacity="0.7"/><rect x="258" y="11" width="18" height="44" fill="#8c9699" /><rect x="258" y="11" width="18" height="44" fill="url(#wv)" /><rect x="276" y="11" width="7" height="44" fill="#3f8c92" /><rect x="276" y="11" width="7" height="44" fill="url(#wh)" /><rect x="301" y="11" width="28" height="45" fill="#86a8ae" /><rect x="301" y="11" width="28" height="45" fill="url(#wh)" /><rect x="76" y="33" width="404" height="4" fill="#d9d0b6" /><rect x="76" y="33" width="404" height="1" fill="#f0ead8" /><rect x="76" y="36" width="404" height="1" fill="#8a7e66" /><g fill="#5a4e3c" opacity="0.75"><rect x="78" y="34.5" width="2.5" height="0.9"/><rect x="83" y="34.5" width="2.5" height="0.9"/><rect x="88" y="34.5" width="2.5" height="0.9"/><rect x="93" y="34.5" width="2.5" height="0.9"/><rect x="98" y="34.5" width="2.5" height="0.9"/><rect x="103" y="34.5" width="2.5" height="0.9"/><rect x="108" y="34.5" width="2.5" height="0.9"/><rect x="113" y="34.5" width="2.5" height="0.9"/><rect x="118" y="34.5" width="2.5" height="0.9"/><rect x="123" y="34.5" width="2.5" height="0.9"/><rect x="128" y="34.5" width="2.5" height="0.9"/><rect x="133" y="34.5" width="2.5" height="0.9"/><rect x="138" y="34.5" width="2.5" height="0.9"/><rect x="143" y="34.5" width="2.5" height="0.9"/><rect x="148" y="34.5" width="2.5" height="0.9"/><rect x="153" y="34.5" width="2.5" height="0.9"/><rect x="158" y="34.5" width="2.5" height="0.9"/><rect x="163" y="34.5" width="2.5" height="0.9"/><rect x="168" y="34.5" width="2.5" height="0.9"/><rect x="173" y="34.5" width="2.5" height="0.9"/><rect x="178" y="34.5" width="2.5" height="0.9"/><rect x="183" y="34.5" width="2.5" height="0.9"/><rect x="188" y="34.5" width="2.5" height="0.9"/><rect x="193" y="34.5" width="2.5" height="0.9"/><rect x="198" y="34.5" width="2.5" height="0.9"/><rect x="203" y="34.5" width="2.5" height="0.9"/><rect x="208" y="34.5" width="2.5" height="0.9"/><rect x="213" y="34.5" width="2.5" height="0.9"/><rect x="218" y="34.5" width="2.5" height="0.9"/><rect x="223" y="34.5" width="2.5" height="0.9"/><rect x="228" y="34.5" width="2.5" height="0.9"/><rect x="233" y="34.5" width="2.5" height="0.9"/><rect x="238" y="34.5" width="2.5" height="0.9"/><rect x="243" y="34.5" width="2.5" height="0.9"/><rect x="248" y="34.5" width="2.5" height="0.9"/><rect x="253" y="34.5" width="2.5" height="0.9"/><rect x="258" y="34.5" width="2.5" height="0.9"/><rect x="263" y="34.5" width="2.5" height="0.9"/><rect x="268" y="34.5" width="2.5" height="0.9"/><rect x="273" y="34.5" width="2.5" height="0.9"/><rect x="278" y="34.5" width="2.5" height="0.9"/><rect x="283" y="34.5" width="2.5" height="0.9"/><rect x="288" y="34.5" width="2.5" height="0.9"/><rect x="293" y="34.5" width="2.5" height="0.9"/><rect x="298" y="34.5" width="2.5" height="0.9"/><rect x="303" y="34.5" width="2.5" height="0.9"/><rect x="308" y="34.5" width="2.5" height="0.9"/><rect x="313" y="34.5" width="2.5" height="0.9"/><rect x="318" y="34.5" width="2.5" height="0.9"/><rect x="323" y="34.5" width="2.5" height="0.9"/><rect x="328" y="34.5" width="2.5" height="0.9"/><rect x="333" y="34.5" width="2.5" height="0.9"/><rect x="338" y="34.5" width="2.5" height="0.9"/><rect x="343" y="34.5" width="2.5" height="0.9"/><rect x="348" y="34.5" width="2.5" height="0.9"/><rect x="353" y="34.5" width="2.5" height="0.9"/><rect x="358" y="34.5" width="2.5" height="0.9"/><rect x="363" y="34.5" width="2.5" height="0.9"/><rect x="368" y="34.5" width="2.5" height="0.9"/><rect x="373" y="34.5" width="2.5" height="0.9"/><rect x="378" y="34.5" width="2.5" height="0.9"/><rect x="383" y="34.5" width="2.5" height="0.9"/><rect x="388" y="34.5" width="2.5" height="0.9"/><rect x="393" y="34.5" width="2.5" height="0.9"/><rect x="398" y="34.5" width="2.5" height="0.9"/><rect x="403" y="34.5" width="2.5" height="0.9"/><rect x="408" y="34.5" width="2.5" height="0.9"/><rect x="413" y="34.5" width="2.5" height="0.9"/><rect x="418" y="34.5" width="2.5" height="0.9"/><rect x="423" y="34.5" width="2.5" height="0.9"/><rect x="428" y="34.5" width="2.5" height="0.9"/><rect x="433" y="34.5" width="2.5" height="0.9"/><rect x="438" y="34.5" width="2.5" height="0.9"/><rect x="443" y="34.5" width="2.5" height="0.9"/><rect x="448" y="34.5" width="2.5" height="0.9"/><rect x="453" y="34.5" width="2.5" height="0.9"/><rect x="458" y="34.5" width="2.5" height="0.9"/><rect x="463" y="34.5" width="2.5" height="0.9"/><rect x="468" y="34.5" width="2.5" height="0.9"/><rect x="473" y="34.5" width="2.5" height="0.9"/><rect x="478" y="34.5" width="2.5" height="0.9"/></g><rect x="164" y="32" width="1" height="5" fill="#f4efe0" /><rect x="258" y="32" width="1" height="5" fill="#f4efe0" /><rect x="329" y="32" width="1" height="5" fill="#f4efe0" /><rect x="386" y="32" width="1" height="5" fill="#f4efe0" /><rect x="328" y="28" width="13" height="28" fill="#b8d4d4" /><rect x="328" y="28" width="13" height="28" fill="url(#wg)" /><rect x="330" y="32" width="1.6" height="3" fill="#203870" /><rect x="333" y="32" width="1.6" height="3" fill="#203870" /><rect x="336" y="32" width="1.6" height="3" fill="#203870" /><rect x="339" y="32" width="1.6" height="3" fill="#203870" /><rect x="330" y="37" width="1.6" height="3" fill="#203870" /><rect x="333" y="37" width="1.6" height="3" fill="#203870" /><rect x="336" y="37" width="1.6" height="3" fill="#203870" /><rect x="339" y="37" width="1.6" height="3" fill="#203870" /><rect x="330" y="42" width="1.6" height="3" fill="#203870" /><rect x="333" y="42" width="1.6" height="3" fill="#203870" /><rect x="336" y="42" width="1.6" height="3" fill="#203870" /><rect x="339" y="42" width="1.6" height="3" fill="#203870" /><rect x="330" y="47" width="1.6" height="3" fill="#203870" /><rect x="333" y="47" width="1.6" height="3" fill="#203870" /><rect x="336" y="47" width="1.6" height="3" fill="#203870" /><rect x="339" y="47" width="1.6" height="3" fill="#203870" /><rect x="330" y="52" width="1.6" height="3" fill="#203870" /><rect x="333" y="52" width="1.6" height="3" fill="#203870" /><rect x="336" y="52" width="1.6" height="3" fill="#203870" /><rect x="339" y="52" width="1.6" height="3" fill="#203870" /><rect x="341" y="27" width="7" height="9" fill="#5ab4c8" /><rect x="342" y="29" width="1.5" height="3" fill="#203870" /><rect x="345" y="29" width="1.5" height="3" fill="#203870" /><rect x="354" y="32" width="10" height="4" fill="#8a6e4a" /><rect x="364" y="32" width="14" height="4" fill="#4a7050" /><rect x="340" y="36" width="26" height="20" fill="#5a7c68" /><rect x="340" y="37" width="26" height="2" fill="#2a4850" /><rect x="341" y="37" width="1.5" height="2" fill="#22407a" /><rect x="344" y="37" width="1.5" height="2" fill="#22407a" /><rect x="347" y="37" width="1.5" height="2" fill="#22407a" /><rect x="350" y="37" width="1.5" height="2" fill="#22407a" /><rect x="353" y="37" width="1.5" height="2" fill="#22407a" /><rect x="356" y="37" width="1.5" height="2" fill="#22407a" /><rect x="359" y="37" width="1.5" height="2" fill="#22407a" /><rect x="362" y="37" width="1.5" height="2" fill="#22407a" /><rect x="340" y="41" width="26" height="2" fill="#2a4850" /><rect x="341" y="41" width="1.5" height="2" fill="#22407a" /><rect x="344" y="41" width="1.5" height="2" fill="#22407a" /><rect x="347" y="41" width="1.5" height="2" fill="#22407a" /><rect x="350" y="41" width="1.5" height="2" fill="#22407a" /><rect x="353" y="41" width="1.5" height="2" fill="#22407a" /><rect x="356" y="41" width="1.5" height="2" fill="#22407a" /><rect x="359" y="41" width="1.5" height="2" fill="#22407a" /><rect x="362" y="41" width="1.5" height="2" fill="#22407a" /><rect x="340" y="45" width="26" height="2" fill="#2a4850" /><rect x="341" y="45" width="1.5" height="2" fill="#22407a" /><rect x="344" y="45" width="1.5" height="2" fill="#22407a" /><rect x="347" y="45" width="1.5" height="2" fill="#22407a" /><rect x="350" y="45" width="1.5" height="2" fill="#22407a" /><rect x="353" y="45" width="1.5" height="2" fill="#22407a" /><rect x="356" y="45" width="1.5" height="2" fill="#22407a" /><rect x="359" y="45" width="1.5" height="2" fill="#22407a" /><rect x="362" y="45" width="1.5" height="2" fill="#22407a" /><rect x="340" y="49" width="26" height="2" fill="#2a4850" /><rect x="341" y="49" width="1.5" height="2" fill="#22407a" /><rect x="344" y="49" width="1.5" height="2" fill="#22407a" /><rect x="347" y="49" width="1.5" height="2" fill="#22407a" /><rect x="350" y="49" width="1.5" height="2" fill="#22407a" /><rect x="353" y="49" width="1.5" height="2" fill="#22407a" /><rect x="356" y="49" width="1.5" height="2" fill="#22407a" /><rect x="359" y="49" width="1.5" height="2" fill="#22407a" /><rect x="362" y="49" width="1.5" height="2" fill="#22407a" /><rect x="340" y="53" width="26" height="2" fill="#2a4850" /><rect x="341" y="53" width="1.5" height="2" fill="#22407a" /><rect x="344" y="53" width="1.5" height="2" fill="#22407a" /><rect x="347" y="53" width="1.5" height="2" fill="#22407a" /><rect x="350" y="53" width="1.5" height="2" fill="#22407a" /><rect x="353" y="53" width="1.5" height="2" fill="#22407a" /><rect x="356" y="53" width="1.5" height="2" fill="#22407a" /><rect x="359" y="53" width="1.5" height="2" fill="#22407a" /><rect x="362" y="53" width="1.5" height="2" fill="#22407a" /><rect x="366" y="36" width="8" height="20" fill="#1c3a3a" /><rect x="374" y="36" width="4" height="20" fill="#4a6a44" /><rect x="376" y="37" width="1" height="18" fill="#2a4a8a" /><rect x="322" y="26" width="4" height="30" fill="#c8d8cc" /><rect x="430" y="25" width="5" height="12" fill="#d8d8c8" /><rect x="422" y="36" width="36" height="20" fill="#b8d0cc" /><rect x="422" y="36" width="36" height="20" fill="url(#wg)" /><rect x="424.0" y="38.5" width="2" height="3" fill="#1e3a68" /><rect x="427.6" y="38.5" width="2" height="3" fill="#1e3a68" /><rect x="431.2" y="38.5" width="2" height="3" fill="#1e3a68" /><rect x="434.8" y="38.5" width="2" height="3" fill="#1e3a68" /><rect x="438.4" y="38.5" width="2" height="3" fill="#1e3a68" /><rect x="442.0" y="38.5" width="2" height="3" fill="#1e3a68" /><rect x="445.6" y="38.5" width="2" height="3" fill="#1e3a68" /><rect x="449.2" y="38.5" width="2" height="3" fill="#1e3a68" /><rect x="452.8" y="38.5" width="2" height="3" fill="#1e3a68" /><rect x="424.0" y="43.5" width="2" height="3" fill="#1e3a68" /><rect x="427.6" y="43.5" width="2" height="3" fill="#1e3a68" /><rect x="431.2" y="43.5" width="2" height="3" fill="#1e3a68" /><rect x="434.8" y="43.5" width="2" height="3" fill="#1e3a68" /><rect x="438.4" y="43.5" width="2" height="3" fill="#1e3a68" /><rect x="442.0" y="43.5" width="2" height="3" fill="#1e3a68" /><rect x="445.6" y="43.5" width="2" height="3" fill="#1e3a68" /><rect x="449.2" y="43.5" width="2" height="3" fill="#1e3a68" /><rect x="452.8" y="43.5" width="2" height="3" fill="#1e3a68" /><rect x="424.0" y="48.5" width="2" height="3" fill="#1e3a68" /><rect x="427.6" y="48.5" width="2" height="3" fill="#1e3a68" /><rect x="431.2" y="48.5" width="2" height="3" fill="#1e3a68" /><rect x="434.8" y="48.5" width="2" height="3" fill="#1e3a68" /><rect x="438.4" y="48.5" width="2" height="3" fill="#1e3a68" /><rect x="442.0" y="48.5" width="2" height="3" fill="#1e3a68" /><rect x="445.6" y="48.5" width="2" height="3" fill="#1e3a68" /><rect x="449.2" y="48.5" width="2" height="3" fill="#1e3a68" /><rect x="452.8" y="48.5" width="2" height="3" fill="#1e3a68" /><rect x="458" y="27" width="12" height="29" fill="#c8d4d8" /><rect x="458" y="30" width="12" height="1.5" fill="#3a5a86" /><rect x="458" y="35" width="12" height="1.5" fill="#3a5a86" /><rect x="458" y="40" width="12" height="1.5" fill="#3a5a86" /><rect x="458" y="45" width="12" height="1.5" fill="#3a5a86" /><rect x="458" y="50" width="12" height="1.5" fill="#3a5a86" /><rect x="458" y="55" width="12" height="1.5" fill="#3a5a86" /><rect x="470" y="22" width="10" height="34" fill="#3a7080" /><rect x="470" y="25" width="10" height="1.5" fill="#1c3a5a" /><rect x="470" y="30" width="10" height="1.5" fill="#1c3a5a" /><rect x="470" y="35" width="10" height="1.5" fill="#1c3a5a" /><rect x="470" y="40" width="10" height="1.5" fill="#1c3a5a" /><rect x="470" y="45" width="10" height="1.5" fill="#1c3a5a" /><rect x="470" y="50" width="10" height="1.5" fill="#1c3a5a" /><rect x="470" y="55" width="10" height="1.5" fill="#1c3a5a" /></svg>
<div class="t" style="left:230px;top:340px;letter-spacing:0.05px">Color: 0x00044000 (960x544) fmt 1</div>
<div class="pb" style="left:586px;border-top:1px solid #696969;border-left:1px solid #696969;border-right:1px solid #fff;border-bottom:1px solid #fff;box-shadow:inset 1px 1px 0 #a0a0a0;background:#f8f8f8"><span style="left:5px;top:4px;letter-spacing:-0.3px">Color</span></div>
<div class="pb" style="left:639px"><span>Depth</span></div>
<div class="pb" style="left:692px"><span style="letter-spacing:-0.25px">Stencil</span></div>

<!-- tabs -->
<div id="tabbody" class="a"></div>
<div class="tab" style="left:25px;width:64px"><span style="left:4px;letter-spacing:-0.2px">Display List</span></div>
<div class="tab" style="left:134px;width:47px;border-color:#3c7fb1;background:linear-gradient(180deg,#eaf6fd 0,#d9f0fc 50%,#bee6fd 50%,#a7d9f5 100%)"><span style="left:2px;letter-spacing:0">Lighting</span></div>
<div class="tab" style="left:181px;width:51px"><span style="left:4px;letter-spacing:0.4px">Texture</span></div>
<div class="tab" style="left:231px;width:52px"><span style="left:3.5px;letter-spacing:0.2px">Settings</span></div>
<div class="tab" style="left:282px;width:41px"><span style="left:3.5px;letter-spacing:0">Lists</span></div>
<div class="tab" style="left:88px;top:378px;width:46px;height:21px;background:#fff"><span style="left:6.5px;top:3px;letter-spacing:-0.2px">Flags</span></div>

<div id="list" class="a">
<div class="a" style="left:0;top:0;width:692px;height:24px;background:linear-gradient(180deg,#fff 0,#fff 10px,#f4f5f7 10px,#f1f2f4 100%);border-bottom:1px solid #d5d5d5"></div>
<div class="a" style="left:345px;top:1px;width:1px;height:22px;background:#e0e1e3"></div>
<div class="t" style="left:7px;top:6px;font-size:11.5px;letter-spacing:-0.3px">Name</div>
<div class="t" style="left:352px;top:6px;font-size:11.5px;letter-spacing:-0.3px">Value</div>
<div class="row" style="top:28px">Lighting enable</div><div class="val" style="top:28px">1</div>
<div class="row" style="top:45px">Light 0 enable</div><div class="val" style="top:45px">1</div>
<div class="row" style="top:62px">Light 1 enable</div><div class="val" style="top:62px">1</div>
<div class="row" style="top:79px">Light 2 enable</div><div class="val" style="top:79px">1</div>
<div class="row" style="top:96px">Light 3 enable</div><div class="val" style="top:96px">1</div>
<div class="row" style="top:113px">Clip enable</div><div class="val" style="top:113px">0</div>
<div class="row" style="top:130px">Cullface enable</div><div class="val" style="top:130px">1</div>
<div class="row" style="top:147px">Texture map enable</div><div class="val" style="top:147px">1</div>
<div class="row" style="top:164px">Fog enable</div><div class="val" style="top:164px">0</div>
<div class="row" style="top:181px">Dither enable</div><div class="val" style="top:181px">1</div>
<div class="row" style="top:198px">Alpha blend enable</div><div class="val" style="top:198px">1</div>
<div class="row" style="top:215px">Alpha test enable</div><div class="val" style="top:215px">1</div>
<div class="row" style="top:232px">Depth test enable</div><div class="val" style="top:232px">1</div>
<div class="row" style="top:249px">Stencil test enable</div><div class="val" style="top:249px">0</div>
<div class="a" style="left:693px;top:0;width:17px;height:255px;background:linear-gradient(90deg,#e3e3e3,#f0f0f0 3px,#f0f0f0 14px,#eeeeee)"></div>
<svg class="a" style="left:693px;top:0" width="17" height="256">
 <path d="M5 12 L8.5 8 L12 12 Z" fill="#303030"/>
 <path d="M5 245 L12 245 L8.5 249 Z" fill="#303030"/>
</svg>
<div class="a" style="left:693px;top:19px;width:15px;height:149px;border:1px solid #979797;border-radius:2px;background:linear-gradient(90deg,#f2f2f2 0,#eaeaea 45%,#d9d9d9 55%,#cfcfcf 100%);box-shadow:inset 0 0 0 1px rgba(255,255,255,.8)"></div>
<svg class="a" style="left:693px;top:88px" width="15" height="10"><path d="M4.5 1.5h6M4.5 4.5h6M4.5 7.5h6" stroke="#555" stroke-width="1"/></svg>
</div>
</body></html>
